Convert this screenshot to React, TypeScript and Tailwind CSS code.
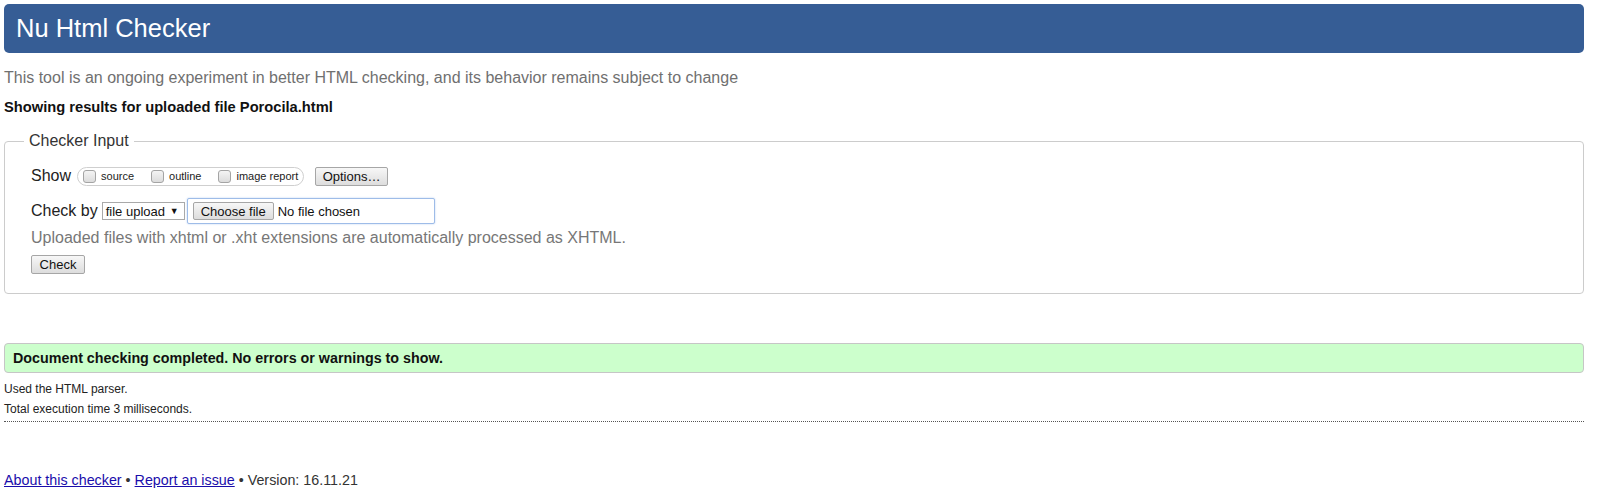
import React from 'react';

const font = "font-['Liberation_Sans',Arial,sans-serif]";

const Checkbox = () => (
  <span className="inline-block h-[13px] w-[13px] shrink-0 rounded-[3px] border border-[#a4a4a4] bg-gradient-to-b from-[#f4f4f4] to-[#dcdcdc]" />
);

const ShowOption = ({ label, last }: { label: string; last?: boolean }) => (
  <label className={`flex items-center gap-[5px] whitespace-nowrap ${last ? '' : 'mr-[17px]'}`}>
    <Checkbox />
    <span className="text-[11px] leading-none text-[#222]">{label}</span>
  </label>
);

const GrayButton = ({ children, className = '' }: { children: React.ReactNode; className?: string }) => (
  <button
    className={`flex items-center justify-center whitespace-nowrap rounded-[2px] border border-[#a6a6a6] bg-gradient-to-b from-[#f7f7f7] to-[#dddddd] text-[13px] leading-none text-[#111] ${className}`}
  >
    {children}
  </button>
);

export default function App() {
  return (
    <div className={`${font} min-h-screen bg-white pt-[4px] pl-[4px] pr-[20px] text-[#222]`}>
      {/* Title bar */}
      <header className="flex h-[49px] items-center rounded-[5px] bg-[#365d95] pl-[12px]">
        <h1 className="text-[25.5px] leading-none text-white">Nu Html Checker</h1>
      </header>

      <p className="mt-[15px] text-[16px] leading-[20px] text-[#707070]">
        This tool is an ongoing experiment in better HTML checking, and its behavior remains subject to change
      </p>
      <p className="mt-[9px] text-[14.7px] font-bold leading-[20px] text-[#111]">
        Showing results for uploaded file Porocila.html
      </p>

      {/* Checker input form */}
      <fieldset className="mt-[15px] h-[162px] rounded-[4px] border border-[#cccccc]">
        <legend className="ml-[19px] px-[5px] text-[16px] leading-[18px] text-[#333]">Checker Input</legend>

        <div className="pl-[26px]">
          <div className="mt-[16px] flex h-[20px] items-center">
            <span className="text-[16px] leading-none text-[#222]">Show</span>
            <div className="ml-[6px] flex h-[19px] w-[227px] items-center rounded-full border border-[#cfcfcf] pl-[5px]">
              <ShowOption label="source" />
              <ShowOption label="outline" />
              <ShowOption label="image report" last />
            </div>
            <GrayButton className="ml-[11px] h-[19px] w-[73px]">Options…</GrayButton>
          </div>

          <div className="mt-[12px] flex h-[26px] items-center">
            <span className="text-[16px] leading-none text-[#222]">Check by</span>
            <div className="ml-[4px] flex h-[18px] w-[83px] items-center justify-between border border-[#a9a9a9] bg-white pl-[3px] pr-[5px] text-[13px] leading-none text-[#111]">
              <span>file upload</span>
              <span className="text-[9px]">▼</span>
            </div>
            <div className="ml-[2px] flex h-[26px] w-[248px] items-center rounded-[2px] border border-[#9ebce8] bg-white pl-[5px] shadow-[0_0_2px_#b5cdf0]">
              <GrayButton className="h-[18px] w-[81px]">Choose file</GrayButton>
              <span className="ml-[4px] text-[13px] leading-none text-[#111]">No file chosen</span>
            </div>
          </div>

          <p className="mt-[4px] text-[16px] leading-[20px] text-[#777]">
            Uploaded files with xhtml or .xht extensions are automatically processed as XHTML.
          </p>

          <GrayButton className="mt-[7px] h-[19px] w-[54px]">Check</GrayButton>
        </div>
      </fieldset>

      {/* Result */}
      <div className="mt-[49px] flex h-[30px] items-center rounded-[4px] border border-[#c6c6c6] bg-[#ccffcc] pl-[8px]">
        <span className="text-[14.3px] font-bold leading-none text-[#111]">
          Document checking completed. No errors or warnings to show.
        </span>
      </div>

      <p className="mt-[6px] text-[12px] leading-[20px] text-[#222]">Used the HTML parser.</p>
      <p className="text-[12px] leading-[20px] text-[#222]">Total execution time 3 milliseconds.</p>
      <div className="mt-[2px] border-t border-dotted border-[#555]" />

      <footer className="mt-[48px] text-[14.3px] leading-[20px] text-[#333]">
        <a href="#" className="text-[#1a0dab] underline">About this checker</a>
        {' • '}
        <a href="#" className="text-[#1a0dab] underline">Report an issue</a>
        {' • Version: 16.11.21'}
      </footer>
    </div>
  );
}
